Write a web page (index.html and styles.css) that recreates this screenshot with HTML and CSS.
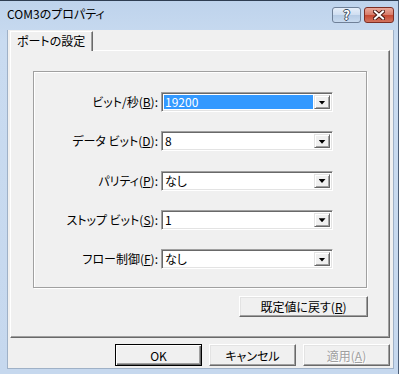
FILE: index.html
```html
<!DOCTYPE html>
<html lang="ja">
<head>
    <meta charset="UTF-8">
    <title>COM3のプロパティ</title>
    <link rel="stylesheet" href="styles.css">
</head>
<body>

<div class="window">
    <div class="titlebar">
        <span class="title">COM3のプロパティ</span>
        <div class="caption-buttons">
            <span class="cap-btn help">?</span>
            <span class="cap-btn close">
                <svg width="12" height="10" viewBox="0 0 12 10">
                    <path d="M2 1.5 L10 8.5 M10 1.5 L2 8.5" stroke="#4a1a14" stroke-width="4" stroke-linecap="square"/>
                    <path d="M2 1.5 L10 8.5 M10 1.5 L2 8.5" stroke="#fff" stroke-width="2" stroke-linecap="square"/>
                </svg>
            </span>
        </div>
    </div>

    <div class="client">
        <div class="tabs">
            <span class="tab">ポートの設定</span>
        </div>

        <div class="panel">
            <div class="group">
                <div class="field-label">ビット/秒(<u>B</u>):</div>
                <div class="combo"><span class="value selected">19200</span><span class="drop"></span></div>

                <div class="field-label">データ ビット(<u>D</u>):</div>
                <div class="combo"><span class="value">8</span><span class="drop"></span></div>

                <div class="field-label">パリティ(<u>P</u>):</div>
                <div class="combo"><span class="value">なし</span><span class="drop"></span></div>

                <div class="field-label">ストップ ビット(<u>S</u>):</div>
                <div class="combo"><span class="value">1</span><span class="drop"></span></div>

                <div class="field-label">フロー制御(<u>F</u>):</div>
                <div class="combo"><span class="value">なし</span><span class="drop"></span></div>
            </div>

            <button class="btn reset">既定値に戻す(<u>R</u>)</button>
        </div>

        <div class="actions">
            <button class="btn default">OK</button>
            <button class="btn">キャンセル</button>
            <button class="btn" disabled>適用(<u>A</u>)</button>
        </div>
    </div>
</div>

</body>
</html>
```

FILE: styles.css
```css
body {
    margin: 0;
    font-family: "Noto Sans CJK JP", "Noto Sans", sans-serif;
    font-size: 12px;
    color: #000;
}
.window {
    width: 399px;
    height: 374px;
    box-sizing: border-box;
    display: flex;
    flex-direction: column;
    background: linear-gradient(#bed3ec, #c9dbf0 40px, #c6d8ee);
    border-top: 1px solid #2e3d52;
    border-right: 1px solid #4d5f78;
}
.titlebar {
    height: 29px;
    display: flex;
    align-items: flex-start;
    padding-left: 7px;
}
.title {
    margin-top: 6px;
    line-height: 14px;
    font-feature-settings: "palt";
}
.caption-buttons {
    margin-left: auto;
    margin-top: 6px;
    margin-right: 4px;
    display: flex;
    gap: 3px;
}
.cap-btn {
    height: 16px;
    box-sizing: border-box;
    border-radius: 3px;
    display: flex;
    align-items: center;
    justify-content: center;
}
.help {
    width: 29px;
    border: 1px solid #6f8098;
    background: linear-gradient(#e6eef9, #cfdef1 50%, #b6cbe4 50%, #c8daef);
    color: #fff;
    font-weight: bold;
    font-size: 13px;
    line-height: 14px;
    text-shadow: 1px 0 #3d4b5e, -1px 0 #3d4b5e, 0 1px #3d4b5e, 0 -1px #3d4b5e;
}
.close {
    width: 30px;
    border: 1px solid #7d2e24;
    background: linear-gradient(#eaa99b, #d77a68 50%, #c5462f 50%, #d2735e);
}
.client {
    flex: 1;
    margin: 0 4px 5px 7px;
    border-left: 1px solid #9fb1c7;
    border-right: 1px solid #9fb1c7;
    border-bottom: 1px solid #9fb1c7;
    background: #f0f0f0;
    display: flex;
    flex-direction: column;
}
.tabs {
    height: 21px;
    padding-left: 2px;
    display: flex;
    align-items: flex-end;
}
.tab {
    position: relative;
    z-index: 1;
    height: 19px;
    padding: 0 7px 0 6px;
    line-height: 18px;
    background: #f0f0f0;
    border-top: 1px solid #fff;
    border-left: 1px solid #fff;
    border-right: 1px solid #696969;
    box-shadow: inset -1px 0 #a0a0a0;
    font-feature-settings: "palt";
}
.panel {
    margin: -1px 3px 0 2px;
    height: 288px;
    box-sizing: border-box;
    border: 1px solid;
    border-color: #fff #696969 #696969 #fff;
    box-shadow: inset -1px -1px #a0a0a0;
    display: flex;
    flex-direction: column;
}
.group {
    margin: 20px 22px 0 22px;
    height: 217px;
    box-sizing: border-box;
    border: 1px solid #a0a0a0;
    box-shadow: inset 1px 1px #fff, 1px 1px #fff;
    padding-top: 20px;
    display: grid;
    grid-template-columns: 124px 172px;
    grid-auto-rows: 20px;
    column-gap: 3px;
    row-gap: 19.25px;
    align-content: start;
}
.field-label {
    text-align: right;
    line-height: 20px;
    white-space: nowrap;
    font-feature-settings: "palt";
}
.combo {
    box-sizing: border-box;
    border: 1px solid;
    border-color: #a0a0a0 #fff #fff #a0a0a0;
    box-shadow: inset 1px 1px #696969, inset -1px -1px #e3e3e3;
    background: #fff;
    padding: 2px;
    display: flex;
}
.value {
    flex: 1;
    margin-right: 1px;
    padding-left: 1px;
    line-height: 14px;
    font-feature-settings: "palt";
}
.value.selected {
    background: #3399ff;
    color: #fff;
}
.drop {
    width: 16px;
    box-sizing: border-box;
    border: 1px solid;
    border-color: #e3e3e3 #696969 #696969 #e3e3e3;
    box-shadow: inset 1px 1px #fff, inset -1px -1px #a0a0a0;
    background: #f0f0f0;
    display: flex;
    align-items: center;
    justify-content: center;
}
.drop::after {
    content: '';
    width: 7px;
    height: 4px;
    margin-top: 1px;
    background: #000;
    clip-path: polygon(0 0, 100% 0, 50% 100%);
}
.btn {
    font-family: inherit;
    font-size: 12px;
    color: #000;
    background: #f0f0f0;
    border: 1px solid;
    border-color: #fff #696969 #696969 #fff;
    box-shadow: inset -1px -1px #a0a0a0, inset 1px 1px #e3e3e3;
    padding: 0;
    box-sizing: border-box;
    font-feature-settings: "palt";
}
.reset {
    align-self: flex-end;
    margin: 8px 21px 0 0;
    width: 129px;
    height: 21px;
}
.actions {
    display: flex;
    justify-content: flex-end;
    gap: 7px;
    margin: 6px 3px 0 0;
}
.actions .btn {
    width: 87px;
    height: 22px;
}
.btn.default {
    border-color: #000;
    box-shadow: inset 1px 1px #fff, inset -1px -1px #696969, inset -2px -2px #a0a0a0;
}
.btn:disabled {
    color: #a0a0a0;
    text-shadow: 1px 1px #fff;
}
```
